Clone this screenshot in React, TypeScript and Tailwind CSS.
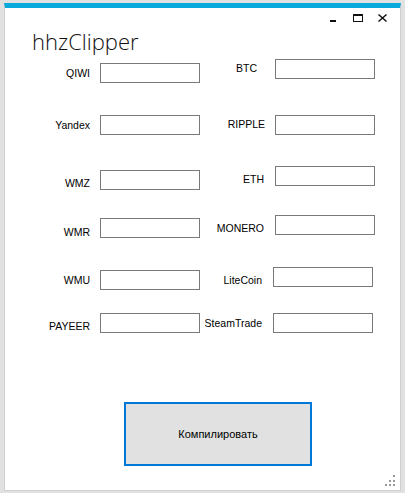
const leftRows = [
  { label: "QIWI", row: "mt-[4px]", lab: "" },
  { label: "Yandex", row: "mt-[32px]", lab: "" },
  { label: "WMZ", row: "mt-[35px]", lab: "pt-[6px]" },
  { label: "WMR", row: "mt-[28px]", lab: "pt-[8px]" },
  { label: "WMU", row: "mt-[32px]", lab: "" },
  { label: "PAYEER", row: "mt-[23px]", lab: "pt-[6px]" },
];

const rightRows = [
  { label: "BTC", row: "mt-0", lab: "w-[57px] mr-[18px] pb-[2px]" },
  { label: "RIPPLE", row: "mt-[36px]", lab: "w-[65px] mr-[10px] pb-[2px]" },
  { label: "ETH", row: "mt-[31px]", lab: "w-[64px] mr-[11px] pt-[6px]" },
  { label: "MONERO", row: "mt-[29px]", lab: "w-[64px] mr-[11px] pt-[6px]" },
  { label: "LiteCoin", row: "mt-[32px]", lab: "w-[62px] mr-[11px] pt-[6px]" },
  { label: "SteamTrade", row: "mt-[26px]", lab: "w-[62px] mr-[11px]" },
];

function Box() {
  return <div className="w-[100px] h-[20px] border border-[#7a7a7a] bg-white shrink-0" />;
}

export default function App() {
  return (
    <div className="w-[405px] h-[493px] bg-[#e1e1e1] pt-[3px] pl-[4px] pr-[4px] pb-[2px] font-['Liberation_Sans',Arial,sans-serif] text-[11px] text-black">
      <div className="relative h-[488px] bg-white border-t-[5px] border-t-[#0aa9dc] border-x border-b border-x-[#d0d0d0] border-b-[#d0d0d0]">
        {/* window controls */}
        <div className="flex justify-end items-end h-[14px] pr-[13px]">
          <svg width="8" height="8" viewBox="0 0 8 8" className="mr-[16px]">
            <rect x="1" y="6" width="6" height="2" fill="#111" />
          </svg>
          <svg width="10" height="8" viewBox="0 0 10 8" className="mr-[15px]">
            <rect x="0.5" y="0.5" width="9" height="7" fill="none" stroke="#111" />
            <rect x="0" y="0" width="10" height="2" fill="#111" />
          </svg>
          <svg width="9" height="8" viewBox="0 0 9 8">
            <path d="M0.5 0.5 L8.5 7.5 M8.5 0.5 L0.5 7.5" stroke="#111" strokeWidth="1.4" />
          </svg>
        </div>

        {/* title */}
        <div className="h-[37px] pl-[27px] pt-[4px] font-['Open_Sans',sans-serif] font-light text-[22px] leading-[30px] text-[#111]">
          hhzClipper
        </div>

        {/* fields */}
        <div className="flex text-[10.5px]">
          <div className="flex flex-col w-[195px]">
            {leftRows.map((r) => (
              <div key={r.label} className={`flex items-center h-[20px] ${r.row}`}>
                <div className={`w-[85px] mr-[10px] text-right leading-[13px] ${r.lab}`}>{r.label}</div>
                <Box />
              </div>
            ))}
          </div>
          <div className="flex flex-col">
            {rightRows.map((r) => (
              <div key={r.label} className={`flex items-center h-[20px] ${r.row}`}>
                <div className={`text-right leading-[13px] whitespace-nowrap ${r.lab}`}>{r.label}</div>
                <Box />
              </div>
            ))}
          </div>
        </div>

        {/* compile button */}
        <div className="mt-[69px] ml-[119px]">
          <button className="w-[188px] h-[64px] border-2 border-[#0078d7] bg-[#e1e1e1] text-[11px] text-black">
            Компилировать
          </button>
        </div>

        {/* size grip */}
        <svg width="12" height="12" viewBox="0 0 12 12" className="absolute right-[4px] bottom-[3px]">
          <rect x="9" y="0" width="2" height="2" fill="#999" />
          <rect x="5" y="5" width="2" height="2" fill="#999" />
          <rect x="9" y="5" width="2" height="2" fill="#999" />
          <rect x="1" y="9" width="2" height="2" fill="#999" />
          <rect x="5" y="9" width="2" height="2" fill="#999" />
          <rect x="9" y="9" width="2" height="2" fill="#999" />
        </svg>
      </div>
    </div>
  );
}
